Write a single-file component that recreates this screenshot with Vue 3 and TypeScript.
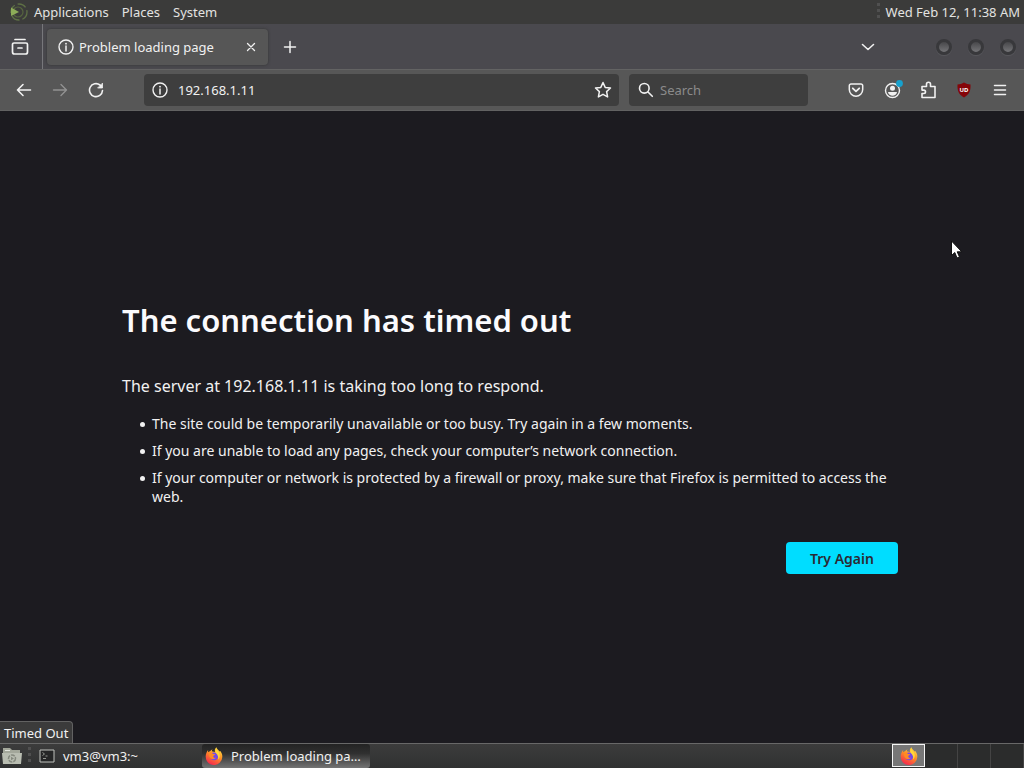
<script setup lang="ts">
import { ref } from 'vue'

const menus: string[] = ['Applications', 'Places', 'System']
const hints: string[] = [
  'The site could be temporarily unavailable or too busy. Try again in a few moments.',
  'If you are unable to load any pages, check your computer’s network connection.',
  'If your computer or network is protected by a firewall or proxy, make sure that Firefox is permitted to access the web.',
]
const windowControls: string[] = ['Minimize', 'Maximize', 'Close']
const address = ref('192.168.1.11')
const query = ref('')
</script>

<template>
  <div class="desktop">
    <svg class="defs" aria-hidden="true">
      <defs>
        <linearGradient id="flame" x1="0.8" y1="0" x2="0.3" y2="1">
          <stop offset="0" stop-color="#ffe94a" />
          <stop offset="0.45" stop-color="#ff9125" />
          <stop offset="1" stop-color="#f5244f" />
        </linearGradient>
        <symbol id="firefox" viewBox="0 0 18 18">
          <path fill="url(#flame)" d="M3.2 3.1 3 5.3 5.2 4.1C6 3.1 6.600 2.700 7.600 2.500 7 3.100 6.800 3.700 6.900 4.200L10 5C9.500 3 10 1.300 11.500.2c.2 2 2.100 2.800 3.100 4.400l.7-.6c1.300 1.700 2.200 3.600 2 6A8.300 8.300 0 0 1 .7 9.500C.7 7 1.700 4.800 3.200 3.100z" />
          <circle cx="9.200" cy="9.300" r="3.900" fill="#7547e8" />
          <path fill="#ff8a24" d="M3.500 6.500c2-1.500 3.500-.8 4.600.4l2.200.2c-.1 1-1.500 1.100-2 2-.4 1.300 1 2.300 2.600 1.500-.8 2.200-4.900 2.600-6.200-.5-.8-1.500-.5-2.500-1.200-3.600z" />
          <path fill="#ffd83a" d="M11.200 1.500c.6 2.500 3.200 3.300 3.600 6.500.1 2-.6 3.500-1.700 4.600.5-2.500-.2-4.700-2.100-6.400-1-1.500-.8-3.200.2-4.700z" />
        </symbol>
        <symbol id="info" viewBox="0 0 16 16">
          <circle cx="8" cy="8" r="7" fill="none" stroke="currentColor" stroke-width="1.400" />
          <circle cx="8" cy="4.700" r="0.900" fill="currentColor" />
          <path d="M8 7v5" stroke="currentColor" stroke-width="1.500" stroke-linecap="round" />
        </symbol>
      </defs>
    </svg>

    <header class="panel">
      <svg class="distro" width="20" height="20" viewBox="0 0 20 20" fill="none">
        <circle cx="10" cy="10" r="8" stroke="#5e7045" stroke-width="1.300" stroke-dasharray="9 3" />
        <circle cx="9" cy="10" r="5" stroke="#56653f" stroke-width="1.200" />
        <path d="M2 5.500 10 10l-8 4z" fill="#8dac58" />
      </svg>
      <nav class="menus">
        <button v-for="menu in menus" :key="menu" type="button">{{ menu }}</button>
      </nav>
      <i class="grip"></i>
      <time class="clock">Wed Feb 12, 11:38 AM</time>
    </header>

    <div class="tabbar">
      <button class="view" type="button" aria-label="Recent browsing">
        <svg width="18" height="18" viewBox="0 0 18 18" fill="none" stroke="currentColor" stroke-width="1.700" stroke-linecap="round">
          <path d="M4 1.500h10M3 5h12a1.500 1.500 0 0 1 1.500 1.500V14a2 2 0 0 1-2 2h-11a2 2 0 0 1-2-2V6.500A1.500 1.500 0 0 1 3 5zM7 10h4" />
        </svg>
      </button>
      <div class="tab">
        <svg width="16" height="16"><use href="#info" /></svg>
        <span>Problem loading page</span>
        <button type="button" aria-label="Close tab">
          <svg width="10" height="10" viewBox="0 0 10 10" stroke="currentColor" stroke-width="1.300" stroke-linecap="round"><path d="m1.500 1.500 7 7M8.500 1.500l-7 7" /></svg>
        </button>
      </div>
      <button class="newtab" type="button" aria-label="New tab">
        <svg width="14" height="14" viewBox="0 0 14 14" stroke="currentColor" stroke-width="1.500" stroke-linecap="round"><path d="M7 1.500v11M1.500 7h11" /></svg>
      </button>
      <button class="alltabs" type="button" aria-label="List all tabs">
        <svg width="14" height="14" viewBox="0 0 14 14" fill="none" stroke="currentColor" stroke-width="1.600" stroke-linecap="round" stroke-linejoin="round"><path d="m1.500 4.500 5.500 5 5.500-5" /></svg>
      </button>
      <div class="controls">
        <button v-for="name in windowControls" :key="name" type="button" :aria-label="name"></button>
      </div>
    </div>

    <div class="toolbar">
      <button class="icon" type="button" aria-label="Back">
        <svg width="16" height="16" viewBox="0 0 16 16" fill="none" stroke="currentColor" stroke-width="1.600" stroke-linecap="round" stroke-linejoin="round"><path d="M14.500 8h-13M7 2.500 1.500 8 7 13.500" /></svg>
      </button>
      <button class="icon faded" type="button" aria-label="Forward">
        <svg width="16" height="16" viewBox="0 0 16 16" fill="none" stroke="currentColor" stroke-width="1.400" stroke-linecap="round" stroke-linejoin="round"><path d="M1.500 8h13M9 2.500 14.500 8 9 13.500" /></svg>
      </button>
      <button class="icon" type="button" aria-label="Reload">
        <svg width="16" height="16" viewBox="0 0 16 16" fill="none" stroke="currentColor" stroke-width="1.600" stroke-linecap="round"><path d="M14.500 8.500A6.500 6.500 0 1 1 12 3l1 1" /><path d="M14.500 1.500V6H10z" fill="currentColor" stroke-width="0.800" stroke-linejoin="round" /></svg>
      </button>
      <div class="field address">
        <svg width="16" height="16"><use href="#info" /></svg>
        <input v-model="address" type="text" aria-label="Address" />
        <button type="button" aria-label="Bookmark this page">
          <svg width="18" height="18" viewBox="0 0 18 18" fill="none" stroke="currentColor" stroke-width="1.500" stroke-linejoin="round"><path d="m9 1.500 2.200 4.900 5.300.6-3.900 3.600 1 5.300L9 13.300l-4.600 2.600 1-5.300L1.500 7l5.300-.6z" /></svg>
        </button>
      </div>
      <div class="field search">
        <svg width="16" height="16" viewBox="0 0 16 16" fill="none" stroke="currentColor" stroke-width="1.600" stroke-linecap="round"><circle cx="6.300" cy="6.300" r="4.800" /><path d="m10 10 4.300 4.300" /></svg>
        <input v-model="query" type="text" placeholder="Search" aria-label="Search" />
      </div>
      <div class="actions">
        <button class="icon" type="button" aria-label="Save to Pocket">
          <svg width="16" height="16" viewBox="0 0 16 16" fill="none" stroke="currentColor" stroke-width="1.500" stroke-linecap="round" stroke-linejoin="round"><path d="M3 2h10a1.700 1.700 0 0 1 1.700 1.700V7.500a6.700 6.700 0 0 1-13.400 0V3.700A1.700 1.700 0 0 1 3 2z" /><path d="m4.800 6.300 3.200 3 3.200-3" stroke-width="1.800" /></svg>
        </button>
        <button class="icon" type="button" aria-label="Account">
          <svg width="22" height="20" viewBox="0 0 22 20"><circle cx="11.500" cy="10.500" r="7" fill="none" stroke="currentColor" stroke-width="1.400" /><circle cx="11.500" cy="8.300" r="2.500" fill="currentColor" /><path d="M7 12h9c-.6 5-8.400 5-9 0z" fill="currentColor" /><circle cx="18.500" cy="3.500" r="3.400" fill="#16a1ce" /></svg>
        </button>
        <button class="icon" type="button" aria-label="Extensions">
          <svg width="16" height="18" viewBox="0 0 16 18" fill="none" stroke="currentColor" stroke-width="1.600" stroke-linejoin="round"><path d="M2 5.500h4.500V3.300a2 2 0 0 1 4 0v2.200H15v11H2v-4h1.800a1.700 1.700 0 0 0 0-3.400H2z" /></svg>
        </button>
        <button class="icon" type="button" aria-label="uBlock Origin">
          <svg width="16" height="16" viewBox="0 0 16 16"><path d="M8 .5c2 1.300 4 1.800 6.500 2 .3 6-1.200 10-6.500 13C2.700 12.500 1.200 8.500 1.500 2.500 4 2.300 6 1.800 8 .5z" fill="#850509" /><text class="shield" x="8" y="10" text-anchor="middle">UD</text></svg>
        </button>
        <button class="icon" type="button" aria-label="Open application menu">
          <svg width="14" height="14" viewBox="0 0 14 14" stroke="currentColor" stroke-width="1.500" stroke-linecap="round"><path d="M1.500 2.500h11M1.500 7h11M1.500 11.500h11" /></svg>
        </button>
      </div>
    </div>

    <main class="page">
      <h1>The connection has timed out</h1>
      <p>The server at 192.168.1.11 is taking too long to respond.</p>
      <ul>
        <li v-for="hint in hints" :key="hint">{{ hint }}</li>
      </ul>
      <button class="retry" type="button">Try Again</button>
      <div class="status">Timed Out</div>
    </main>

    <footer class="taskbar">
      <button class="files" type="button" aria-label="Files">
        <svg width="20" height="18" viewBox="0 0 20 18"><path d="M1 1h7l2 2h8v3h1v11H1z" fill="#a3a79a" /><path d="M0 6h20l-1 11H1z" fill="#b9bdb1" /><circle cx="10" cy="11.500" r="3.500" fill="none" stroke="#85897e" stroke-width="1.500" stroke-dasharray="4 1" /><path d="m9 9.800 3 1.700-3 1.700z" fill="#85897e" /><path d="M3 3.500h5" stroke="#e2e4dc" /></svg>
      </button>
      <i class="grip"></i>
      <button class="task" type="button">
        <svg width="16" height="14" viewBox="0 0 16 14" fill="#252626" stroke="#bfc1bc"><path d="M1 1h14v12H1z" /><path d="m3.500 3.500 2 1.500-2 1.500M6.500 7h2M4 9.500h3" fill="none" stroke="#92958f" /></svg>
        <span>vm3@vm3:~</span>
      </button>
      <button class="task active" type="button">
        <svg width="18" height="18"><use href="#firefox" /></svg>
        <span>Problem loading pa…</span>
      </button>
      <div class="pager">
        <button class="current" type="button" aria-label="Workspace 1"><svg width="18" height="18"><use href="#firefox" /></svg></button>
        <button type="button" aria-label="Workspace 2"></button>
        <button type="button" aria-label="Workspace 3"></button>
        <button type="button" aria-label="Workspace 4"></button>
      </div>
    </footer>

    <svg class="cursor" width="14" height="20" viewBox="0 0 14 20" aria-hidden="true"><path d="M1.500 1v14.500l3.300-3 2.200 5.500 2.500-1-2.300-5.200h4.600z" fill="#fff" stroke="#111" /></svg>
  </div>
</template>

<style>
body {
  margin: 0;
  background: #1c1b22;
}
</style>

<style scoped>
.desktop {
  position: relative;
  display: flex;
  flex-direction: column;
  height: 100vh;
  overflow: hidden;
  background: #1c1b20;
  color: #f1f1f1;
  font: 13px/20px "Noto Sans", "Open Sans", sans-serif;
}
.desktop * {
  box-sizing: border-box;
}
.defs {
  position: absolute;
  width: 0;
  height: 0;
}
svg {
  display: block;
  flex: none;
}
button {
  padding: 0;
  border: 0;
  background: none;
  color: inherit;
  font: inherit;
}
.panel {
  display: flex;
  align-items: center;
  flex: none;
  height: 24px;
  padding: 0 4px 0 9px;
  background: #3b3b3a;
  color: #e3e3e1;
}
.menus {
  display: flex;
  gap: 13px;
  margin-left: 5px;
}
.grip {
  width: 3px;
  height: 18px;
  background: repeating-linear-gradient(#505050 0 3px, transparent 3px 6px);
}
.panel .grip {
  margin: 0 6px 0 auto;
}
.tabbar {
  display: flex;
  align-items: center;
  flex: none;
  height: 45px;
  background: #4a494e;
}
.view {
  display: grid;
  place-items: center;
  width: 43px;
  height: 100%;
  padding-right: 3px;
  border-right: 1px solid #77777b;
}
.tab {
  display: flex;
  align-items: center;
  gap: 5px;
  width: 221px;
  height: 36px;
  margin-left: 4px;
  padding: 0 12px 0 11px;
  border-radius: 4px;
  background: #565656;
  box-shadow: 0 0 3px #333;
}
.tab button {
  margin-left: auto;
}
.newtab {
  margin-left: 15px;
}
.alltabs {
  margin-left: auto;
}
.controls {
  display: flex;
  gap: 16px;
  margin: 0 8px 0 61px;
}
.controls button {
  width: 16px;
  height: 16px;
  border: 3px solid #38383b;
  border-radius: 50%;
  background: linear-gradient(#47474a, #747477);
  box-shadow: 0 1px 1px #59595d;
}
.toolbar {
  display: flex;
  align-items: center;
  flex: none;
  height: 42px;
  padding: 0 6px;
  border-top: 1px solid #636363;
  border-bottom: 1px solid #626262;
  background: #575757;
}
.icon {
  display: grid;
  place-items: center;
  width: 36px;
  height: 32px;
}
.faded {
  color: #929292;
}
.shield {
  fill: #fff;
  font-size: 6px;
  font-weight: 700;
}
.field {
  display: flex;
  align-items: center;
  height: 32px;
  border-radius: 4px;
  background: #3e3e3e;
}
.field input {
  flex: 1;
  min-width: 0;
  padding: 0;
  border: 0;
  outline: 0;
  background: none;
  color: #f1f1f1;
  font: inherit;
}
.field input::placeholder {
  color: #8b8b8b;
  opacity: 1;
}
.address {
  flex: 1;
  gap: 10px;
  margin-left: 30px;
  padding: 0 7px 0 8px;
}
.search {
  width: 179px;
  gap: 6px;
  margin-left: 10px;
  padding: 0 9px;
}
.actions {
  display: flex;
  margin-left: 30px;
}
.page {
  position: relative;
  display: flex;
  flex: 1;
  flex-direction: column;
  justify-content: center;
  min-height: 0;
  padding: 20px 126px 0 122px;
  font-size: 14px;
  line-height: 19px;
}
h1 {
  margin: 0 0 34px;
  color: #fbfbfe;
  font-size: 31px;
  font-weight: 600;
  line-height: 40px;
}
p {
  margin: 0;
  font-size: 16px;
  line-height: 24px;
}
ul {
  margin: 16px 0 36px;
  padding: 0 0 0 18px;
  list-style: none;
}
li {
  display: flex;
}
li::before {
  content: "";
  flex: none;
  width: 5px;
  height: 5px;
  margin: 8px 7px 0 0;
  border-radius: 50%;
  background: currentColor;
}
li + li {
  margin-top: 8px;
}
.retry {
  align-self: flex-end;
  min-width: 112px;
  height: 32px;
  border-radius: 4px;
  background: #00ddff;
  color: #2b2a33;
  font-weight: 600;
}
.status {
  position: absolute;
  bottom: 0;
  left: 0;
  padding: 1px 4px 0 4px;
  border: 1px solid #626262;
  border-bottom: 0;
  border-left: 0;
  border-top-right-radius: 4px;
  background: #3b3b3b;
  font-size: 13px;
  line-height: 20px;
}
.taskbar {
  display: flex;
  align-items: center;
  flex: none;
  height: 25px;
  padding-left: 2px;
  border-top: 1px solid #686868;
  background: linear-gradient(#3c3c3c, #303131);
}
.taskbar .grip {
  margin: 0 7px 0 6px;
}
.task {
  display: flex;
  align-items: center;
  width: 164px;
  height: 24px;
  gap: 8px;
  padding: 0 5px 0 1px;
  text-align: left;
  white-space: nowrap;
}
.task.active {
  width: 168px;
  padding-left: 3px;
  border-radius: 3px;
  background: linear-gradient(#232323, #303030 40%, #747474);
}
.pager {
  display: flex;
  height: 100%;
  margin-left: auto;
}
.pager button {
  width: 33px;
  border-right: 1px solid #444;
  background: #2b2c2c;
}
.pager .current {
  display: grid;
  place-items: center;
  height: 23px;
  border: 1px solid #f5f5f5;
  background: #777;
}
.cursor {
  position: absolute;
  top: 240px;
  left: 950px;
}
</style>
